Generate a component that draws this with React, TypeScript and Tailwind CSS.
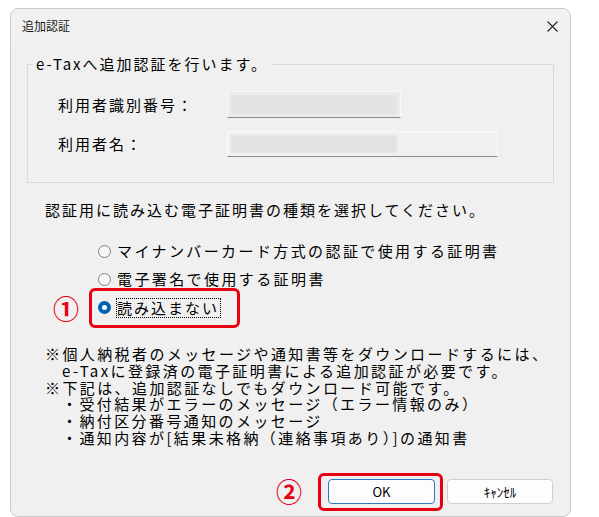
const jp = "font-['Noto_Sans_CJK_JP','Noto_Sans',sans-serif]";

function Radio({ checked }: { checked?: boolean }) {
	if (checked) {
		return (
			<span className="w-[13px] h-[13px] rounded-full bg-[#0063b1] flex items-center justify-center shrink-0">
				<span className="w-[5px] h-[5px] rounded-full bg-white" />
			</span>
		);
	}
	return <span className="w-[13px] h-[13px] rounded-full border border-[#808080] bg-[#f7f7f7] shrink-0" />;
}

export default function App() {
	return (
		<div className={`w-[599px] h-[517px] bg-white pt-[8px] pl-[10px] ${jp}`}>
			<div className="w-[561px] h-[509px] rounded-[8px] border border-[#cacaca] bg-[#f0f0f0] flex flex-col overflow-hidden">
				{/* title bar */}
				<div className="h-[34px] flex items-center justify-between pl-[11px] pr-[12px] bg-[#f1f1f1]">
					<span className="text-[12px] text-[#1a1a1a] leading-none">追加認証</span>
					<svg width="11" height="11" viewBox="0 0 11 11" className="text-[#222]">
						<path d="M0.5 0.5 L10.5 10.5 M10.5 0.5 L0.5 10.5" stroke="currentColor" strokeWidth="1.1" />
					</svg>
				</div>

				<div className="flex-1 flex flex-col text-[15px] tracking-[2px] text-black">
					<fieldset className="mx-[16px] mt-[11px] border border-[#d9d9d9] h-[129px] pl-[30px]">
						<legend className="-ml-[25px] px-[3px] leading-[20px]">e-Taxへ追加認証を行います。</legend>
						<div className="flex items-center mt-[17px]">
							<span className="w-[169px] leading-[20px]">利用者識別番号：</span>
							<div className="w-[174px] h-[27px] border border-[#f8f8f8] border-b-[#8a8a8a] bg-[#ececec] p-[3px]">
								<div className="h-full w-[166px] bg-[#e3e3e3] blur-[1px]" />
							</div>
						</div>
						<div className="flex items-center mt-[13px]">
							<span className="w-[169px] leading-[20px]">利用者名：</span>
							<div className="w-[271px] h-[26px] border border-[#fafafa] border-b-[#8a8a8a] bg-[#f1f1f1] p-[3px]">
								<div className="h-full w-[166px] bg-[#e3e3e3] blur-[1px]" />
							</div>
						</div>
					</fieldset>

					<p className="pl-[34px] mt-[17px] leading-[20px]">認証用に読み込む電子証明書の種類を選択してください。</p>

					<div className="pl-[87px] mt-[17px] flex flex-col">
						<div className="h-[28px] flex items-center gap-[6px]">
							<Radio />
							<span className="leading-[20px] tracking-[2.4px]">マイナンバーカード方式の認証で使用する証明書</span>
						</div>
						<div className="h-[28px] flex items-center gap-[6px]">
							<Radio />
							<span className="leading-[20px] tracking-[2.4px]">電子署名で使用する証明書</span>
						</div>
						<div className="relative h-[29px] flex items-center gap-[5px]">
							<Radio checked />
							<span className="leading-[18px] border border-dotted border-black pr-[1px] tracking-[2px]">読み込まない</span>
							<span className="absolute left-[-9px] top-[-5px] w-[151px] h-[40px] border-[3px] border-[#e60012] rounded-[6px]" />
							<span className="absolute left-[-45px] top-[0px] text-[26px] leading-[29px] font-bold text-[#e60012] tracking-normal">①</span>
						</div>
					</div>

					<div className="pl-[34px] mt-[24px] leading-[16.8px] tracking-[2.4px]">
						<p>※個人納税者のメッセージや通知書等をダウンロードするには、</p>
						<p className="pl-[17px]">e-Taxに登録済の電子証明書による追加認証が必要です。</p>
						<p>※下記は、追加認証なしでもダウンロード可能です。</p>
						<p className="pl-[17px]">・受付結果がエラーのメッセージ（エラー情報のみ）</p>
						<p className="pl-[17px]">・納付区分番号通知のメッセージ</p>
						<p className="pl-[17px]">・通知内容が[結果未格納（連絡事項あり）]の通知書</p>
					</div>

					<div className="mt-auto mb-[12px] pr-[17px] flex items-center justify-end tracking-normal">
						<span className="text-[26px] leading-none font-bold text-[#e60012] mr-[26px]">②</span>
						<div className="relative">
							<button className="w-[107px] h-[25px] rounded-[4px] border border-[#2f78c5] bg-[#fdfdfd] text-[13px] leading-none text-black">OK</button>
							<span className="absolute left-[-10px] top-[-6px] w-[125px] h-[38px] border-[3px] border-[#e60012] rounded-[6px]" />
						</div>
						<button className="ml-[12px] w-[106px] h-[25px] rounded-[4px] border border-[#d0d0d0] bg-[#fdfdfd] text-[13px] leading-none text-black">ｷｬﾝｾﾙ</button>
					</div>
				</div>
			</div>
		</div>
	);
}
